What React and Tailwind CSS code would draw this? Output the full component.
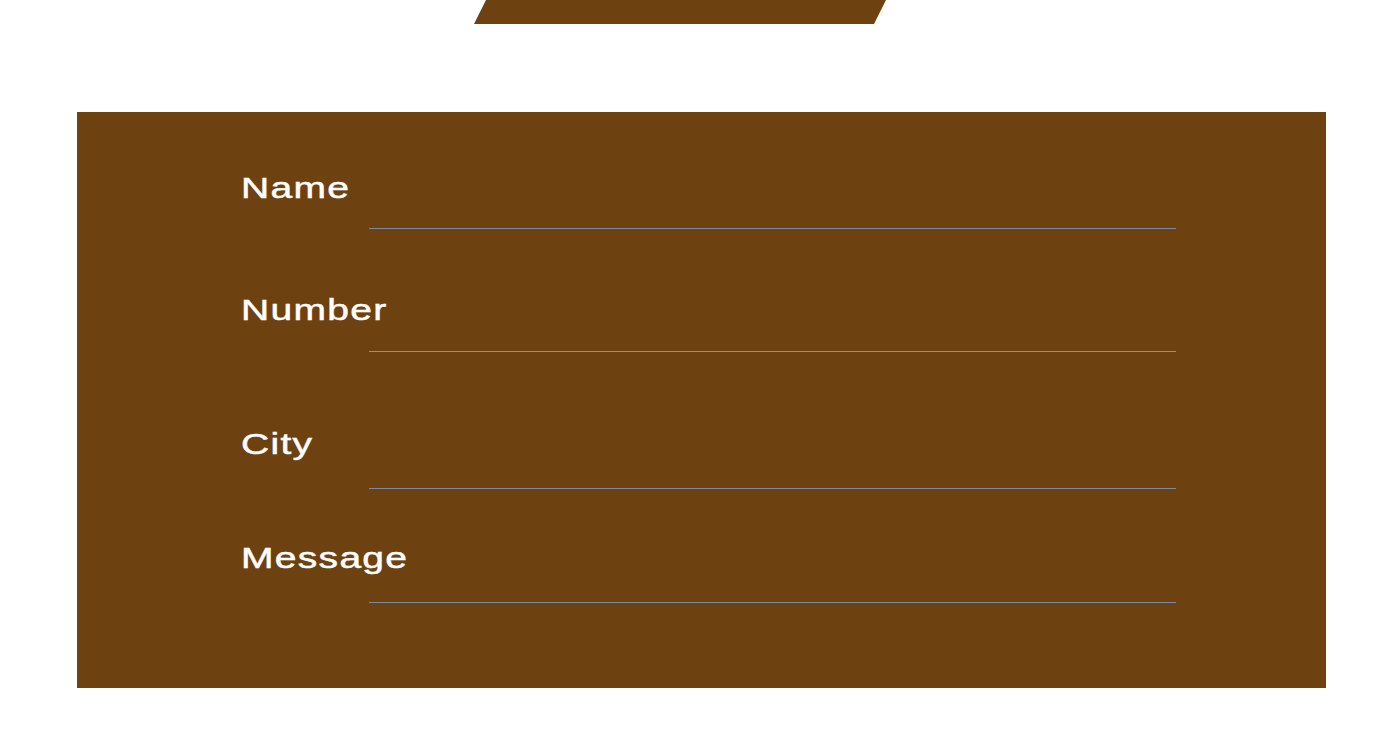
import React from 'react';

const fields = [
  { label: 'Name', top: 'mt-0', gap: 'mt-[26px]', line: 'bg-[#7e8aa3]' },
  { label: 'Number', top: 'mt-[65px]', gap: 'mt-[27px]', line: 'bg-[#a08e7a]' },
  { label: 'City', top: 'mt-[76px]', gap: 'mt-[30px]', line: 'bg-[#7e8aa3]' },
  { label: 'Message', top: 'mt-[53px]', gap: 'mt-[30px]', line: 'bg-[#7e8aa3]' },
];

export default function App() {
  return (
    <div className="min-h-screen overflow-hidden bg-white font-['Liberation_Sans',Arial,sans-serif]">
      {/* top tab */}
      <div className="h-6 w-[400px] ml-[480px] bg-[#6e4210] -skew-x-[26.6deg]"></div>

      <form className="mt-[88px] ml-[77px] w-[1249px] h-[576px] bg-[#6e4210] pt-[60px] pl-[164px]">
        {fields.map(f => (
          <div key={f.label} className={f.top}>
            <label className="block text-[30px] leading-[30px] text-white tracking-[1px] origin-left translate-y-px scale-x-[1.3] [-webkit-text-stroke:0.5px_white]">
              {f.label}
            </label>
            <div className={`${f.gap} ml-[128px] w-[807px] h-px ${f.line}`}></div>
          </div>
        ))}
      </form>
    </div>
  );
}
